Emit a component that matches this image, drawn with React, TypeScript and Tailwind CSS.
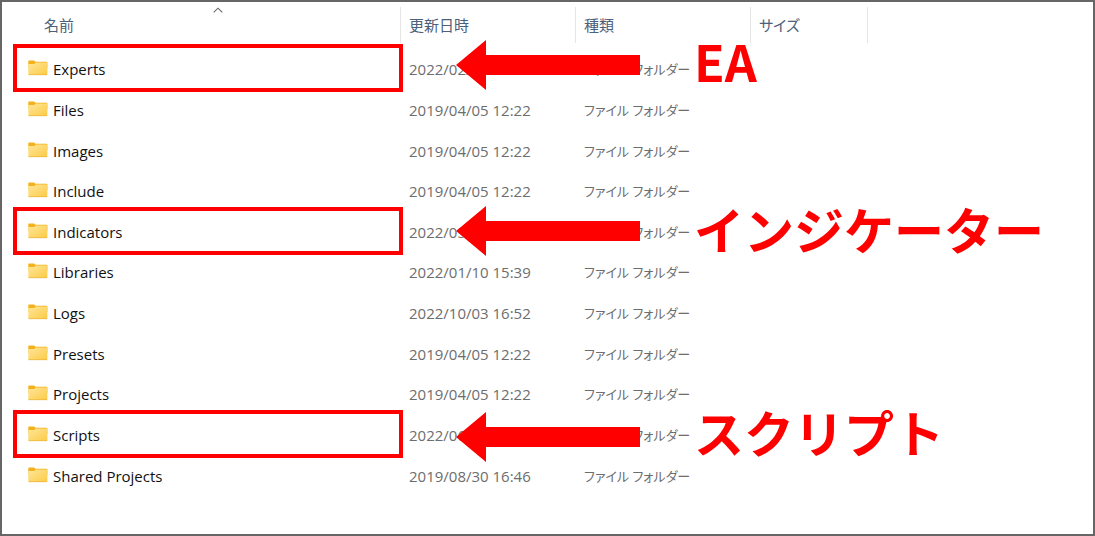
import React, { useState } from "react";

type SortKey = "name" | "date" | "type" | "size";

const columns: { key: SortKey; label: string }[] = [
  { key: "name", label: "名前" },
  { key: "date", label: "更新日時" },
  { key: "type", label: "種類" },
  { key: "size", label: "サイズ" },
];

const folders = [
  { name: "Experts", date: "2022/02/17 14:30" },
  { name: "Files", date: "2019/04/05 12:22" },
  { name: "Images", date: "2019/04/05 12:22" },
  { name: "Include", date: "2019/04/05 12:22" },
  { name: "Indicators", date: "2022/05/17 14:30" },
  { name: "Libraries", date: "2022/01/10 15:39" },
  { name: "Logs", date: "2022/10/03 16:52" },
  { name: "Presets", date: "2019/04/05 12:22" },
  { name: "Projects", date: "2019/04/05 12:22" },
  { name: "Scripts", date: "2022/06/17 14:30" },
  { name: "Shared Projects", date: "2019/08/30 16:46" },
];

// notes drawn over the list
const notes = [
  { label: "EA", box: "top-[42px]", arrow: "top-[38px]", text: "top-[33px]" },
  {
    label: "インジケーター",
    box: "top-[205px]",
    arrow: "top-[204px]",
    text: "top-[201px]",
  },
  {
    label: "スクリプト",
    box: "top-[408px]",
    arrow: "top-[410px]",
    text: "top-[404px]",
  },
];

function FolderIcon() {
  return (
    <svg
      width="20"
      height="18"
      viewBox="0 0 20 18"
      className="shrink-0"
      aria-hidden="true"
    >
      <defs>
        <linearGradient id="folder" x1="0" y1="0" x2="1" y2="1">
          <stop offset="0" stopColor="#ffe69b" />
          <stop offset="1" stopColor="#fccb45" />
        </linearGradient>
      </defs>
      <path
        d="M0.3 1.2Q0.3 0.4 1.1 0.4H6L7.6 1.7H18.6Q19.4 1.7 19.4 2.5V8H0.3Z"
        fill="#f3b21b"
      />
      <path
        d="M0.3 4H6.2L7.8 2.4H19.4V14.2Q19.4 15 18.6 15H1.1Q0.3 15 0.3 14.2Z"
        fill="url(#folder)"
      />
      <path d="M0.5 14.7H19.2" stroke="#e9b339" strokeWidth="0.7" />
    </svg>
  );
}

function Arrow({ className }: { className: string }) {
  return (
    <svg
      width="184"
      height="50"
      viewBox="0 0 184 50"
      className={`absolute left-[454px] ${className}`}
      aria-hidden="true"
    >
      <path d="M0 25L30 0V15H184V35H30V50Z" fill="#ff0000" />
    </svg>
  );
}

function App() {
  const [sortKey, setSortKey] = useState<SortKey>("name");

  const rows = [...folders].sort((a, b) =>
    sortKey === "date"
      ? b.date.localeCompare(a.date)
      : a.name.localeCompare(b.name)
  );

  return (
    <main className="relative min-h-screen overflow-hidden border-2 border-[#666] bg-white font-['Open_Sans','Noto_Sans_CJK_JP',sans-serif] text-[15px] leading-5">
      <table className="w-full table-fixed border-collapse text-left">
        <colgroup>
          <col className="w-[399px]" />
          <col className="w-[175px]" />
          <col className="w-[175px]" />
          <col className="w-[117px]" />
          <col />
        </colgroup>
        <thead>
          <tr>
            {columns.map((column) => (
              <th
                key={column.key}
                className="p-0 pt-[5px] pb-[6px] font-normal first:pl-[34px]"
              >
                <button
                  type="button"
                  onClick={() => setSortKey(column.key)}
                  className="relative block h-9 w-full border-r border-[#e5e5e5] pl-2 text-left text-[#4c607a] [font-feature-settings:'palt']"
                >
                  {sortKey === column.key && (
                    <svg
                      width="10"
                      height="6"
                      viewBox="0 0 10 6"
                      className="absolute top-0 left-1/2 -translate-x-1/2"
                      aria-hidden="true"
                    >
                      <path
                        d="M0.7 5.3L5 1.2L9.3 5.3"
                        fill="none"
                        stroke="#666"
                        strokeWidth="1.1"
                      />
                    </svg>
                  )}
                  {column.label}
                </button>
              </th>
            ))}
          </tr>
        </thead>
        <tbody className="h-[447px]">
          {rows.map((folder) => (
            <tr key={folder.name}>
              <td className="p-0 pl-[26px] text-[#111]">
                <div className="flex items-center gap-[5px]">
                  <FolderIcon />
                  <span>{folder.name}</span>
                </div>
              </td>
              <td className="p-0 pl-2 text-[#6d6d6d]">{folder.date}</td>
              <td className="p-0 pl-2 text-[13px] text-[#6d6d6d] [font-feature-settings:'palt']">
                ファイル フォルダー
              </td>
              <td className="p-0"></td>
            </tr>
          ))}
        </tbody>
      </table>

      {notes.map((note) => (
        <React.Fragment key={note.label}>
          <div
            className={`pointer-events-none absolute left-[11px] h-12 w-[390px] border-4 border-[#ff0000] ${note.box}`}
          />
          <Arrow className={note.arrow} />
          <p
            className={`absolute left-[692px] font-['Noto_Sans_CJK_JP',sans-serif] text-[50px] leading-[50px] font-bold whitespace-nowrap text-[#ff0000] ${note.text}`}
          >
            {note.label}
          </p>
        </React.Fragment>
      ))}
    </main>
  );
}

export default App;
